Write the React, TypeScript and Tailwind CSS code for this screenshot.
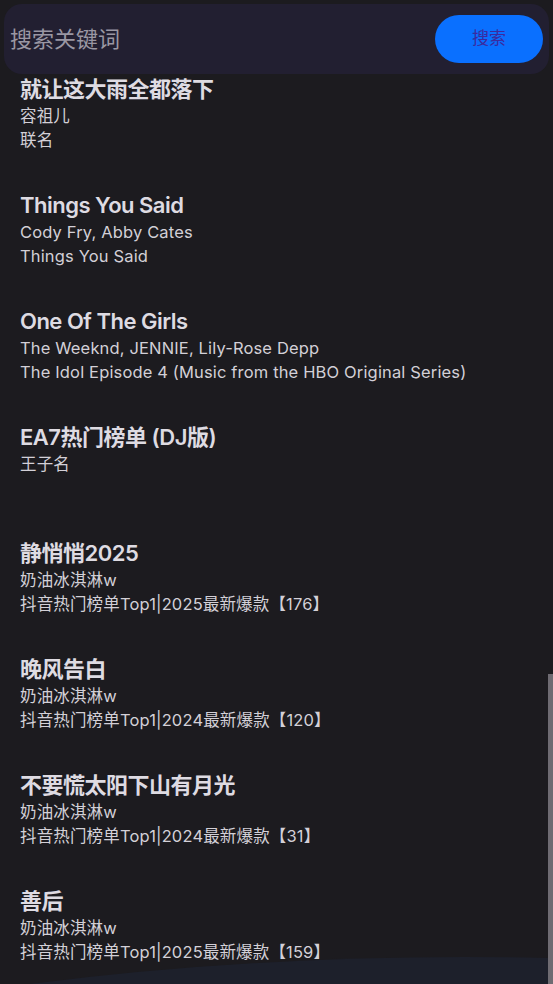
import React from "react"

interface Song {
  title: string
  artist: string
  album: string
}

const songs: Song[] = [
  { title: "就让这大雨全都落下", artist: "容祖儿", album: "联名" },
  { title: "Things You Said", artist: "Cody Fry, Abby Cates", album: "Things You Said" },
  {
    title: "One Of The Girls",
    artist: "The Weeknd, JENNIE, Lily-Rose Depp",
    album: "The Idol Episode 4 (Music from the HBO Original Series)",
  },
  { title: "EA7热门榜单 (DJ版)", artist: "王子名", album: "" },
  { title: "静悄悄2025", artist: "奶油冰淇淋w", album: "抖音热门榜单Top1|2025最新爆款【176】" },
  { title: "晚风告白", artist: "奶油冰淇淋w", album: "抖音热门榜单Top1|2024最新爆款【120】" },
  { title: "不要慌太阳下山有月光", artist: "奶油冰淇淋w", album: "抖音热门榜单Top1|2024最新爆款【31】" },
  { title: "善后", artist: "奶油冰淇淋w", album: "抖音热门榜单Top1|2025最新爆款【159】" },
]

function SongRow({ song }: { song: Song }) {
  return (
    <div className="h-[116px] px-5">
      <div className="h-[30px] text-[22px] leading-[30px] font-semibold tracking-[-0.5px] text-[#dedbe2] whitespace-nowrap">
        {song.title}
      </div>
      <div className="h-6 text-[16.5px] leading-6 tracking-[0.15px] text-[#d3d0d7] whitespace-nowrap">
        {song.artist}
      </div>
      <div className="h-6 text-[16.5px] leading-6 tracking-[0.15px] text-[#d3d0d7] whitespace-nowrap">
        {song.album}
      </div>
    </div>
  )
}

export default function App() {
  return (
    <div
      className="relative w-[553px] h-[984px] overflow-hidden bg-[#1c1b1f]"
      style={{ fontFamily: 'Inter, "Noto Sans CJK SC", sans-serif' }}
    >
      {/* search header */}
      <div className="px-1 pt-1">
        <div className="h-[70px] rounded-[18px] bg-[#221f31] flex items-center justify-between pl-[6px] pr-[6px]">
          <span className="text-[22px] text-[#9a97a3]">搜索关键词</span>
          <button className="w-[108px] h-[48px] rounded-full bg-[#0a70ff] text-[#3b2a9e] text-[17px]">
            搜索
          </button>
        </div>
      </div>

      {/* results */}
      <div className="flex flex-col">
        {songs.map((s, i) => (
          <SongRow key={i} song={s} />
        ))}
      </div>

      {/* scrollbar */}
      <div className="absolute right-0 top-[674px] w-[5px] h-[310px] bg-[#6e6b72]" />

      {/* bottom wave */}
      <svg className="absolute left-0 bottom-0" width="548" height="30" viewBox="0 0 548 30">
        <path d="M30 30 Q 280 -2 548 4 L548 30 Z" fill="#1d202b" />
      </svg>
    </div>
  )
}
